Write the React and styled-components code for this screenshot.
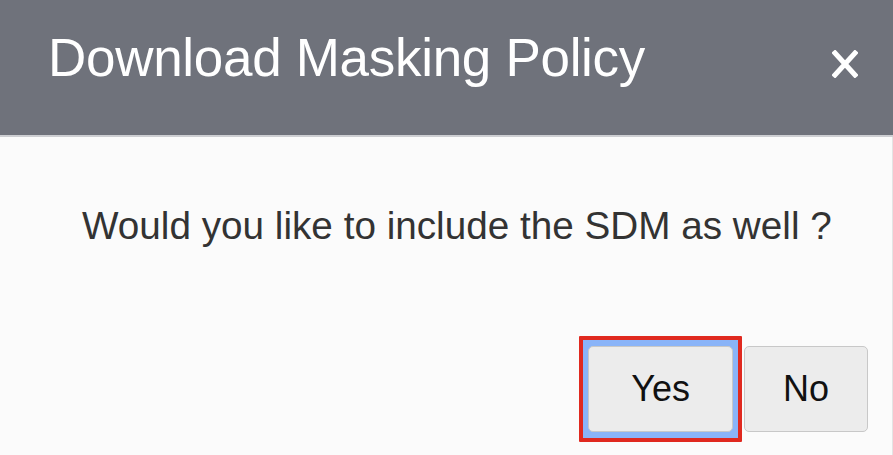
import React from 'react';
import styled, { createGlobalStyle } from 'styled-components';

const GlobalStyle = createGlobalStyle`
  html, body {
    margin: 0;
    padding: 0;
    background: #fbfbfb;
  }
  body {
    font-family: "Liberation Sans", Arial, Helvetica, sans-serif;
  }
`;

const Dialog = styled.div`
  width: 893px;
  height: 455px;
  display: flex;
  flex-direction: column;
  background: #fbfbfb;
  overflow: hidden;
`;

const Header = styled.div`
  height: 137px;
  box-sizing: border-box;
  padding: 28px 34px 0 48px;
  display: flex;
  align-items: flex-start;
  justify-content: space-between;
  background: #6f727b;
  border-bottom: 2px solid #cdced2;
  flex-shrink: 0;
`;

const Title = styled.h1`
  margin: 0;
  font-size: 53px;
  line-height: 60px;
  font-weight: 400;
  color: #ffffff;
  letter-spacing: -0.3px;
`;

const CloseButton = styled.button`
  margin-top: 21px;
  width: 28px;
  height: 30px;
  padding: 0;
  border: none;
  background: transparent;
  display: flex;
  align-items: center;
  justify-content: center;
  cursor: pointer;
`;

const Body = styled.div`
  flex: 1;
  display: flex;
  flex-direction: column;
  border-right: 1px solid #e4e4e4;
`;

const Message = styled.p`
  margin: 67px 0 0 82px;
  font-size: 38.7px;
  line-height: 44px;
  color: #333333;
`;

const Actions = styled.div`
  margin-top: 88px;
  padding-right: 24px;
  display: flex;
  justify-content: flex-end;
  align-items: center;
  gap: 2px;
`;

const Highlight = styled.div`
  display: flex;
  padding: 6px 5px;
  border: 4px solid #e0291f;
  background: #8ab4f8;
  border-radius: 1px;
`;

const Button = styled.button`
  height: 86px;
  padding: 0 ${(p) => p.$pad}px;
  box-sizing: border-box;
  border: 1px solid #c8c8c8;
  border-radius: 5px;
  background: #ececec;
  font-family: "Liberation Sans", Arial, Helvetica, sans-serif;
  font-size: 36px;
  color: #111111;
  cursor: pointer;
`;

const CloseIcon = () => (
  <svg width="26" height="28" viewBox="0 0 26 28">
    <path d="M3 3 L23 25 M23 3 L3 25" stroke="#ffffff" strokeWidth="5" strokeLinecap="square" />
  </svg>
);

export default function App() {
  return (
    <>
      <GlobalStyle />
      <Dialog>
        <Header>
          <Title>Download Masking Policy</Title>
          <CloseButton aria-label="Close">
            <CloseIcon />
          </CloseButton>
        </Header>
        <Body>
          <Message>Would you like to include the SDM as well ?</Message>
          <Actions>
            <Highlight>
              <Button $pad={42}>Yes</Button>
            </Highlight>
            <Button $pad={38}>No</Button>
          </Actions>
        </Body>
      </Dialog>
    </>
  );
}
